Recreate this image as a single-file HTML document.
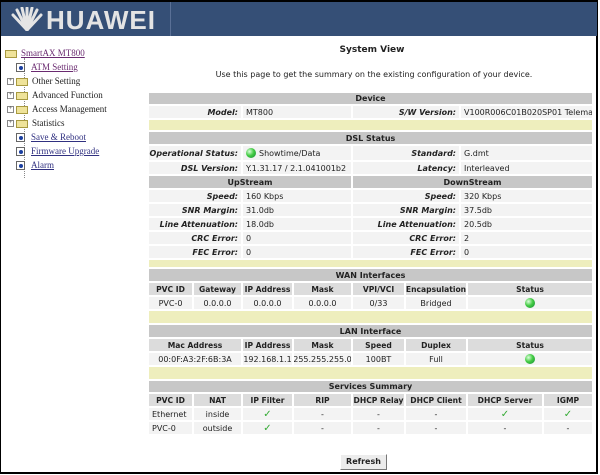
<!DOCTYPE html>
<html><head><meta charset="utf-8"><style>
*{margin:0;padding:0;box-sizing:border-box}
body{width:600px;height:475px;background:#fff;position:relative;overflow:hidden;font-family:"DejaVu Sans",Verdana,sans-serif;font-size:8px;color:#222}
.frame{position:absolute;left:0;top:0;width:598px;height:474px;border:1px solid #000;border-top-width:2px;border-right-width:2px;border-bottom-width:2px}
.hdr{position:absolute;left:1px;top:2px;width:596px;height:34px;background:#354f76}
.hdr .div{position:absolute;left:169px;top:0;width:1px;height:34px;background:#5a7096}
.logo{position:absolute;left:45px;top:3px;font:bold 26px "Liberation Sans",Arial,sans-serif;color:#e4e4e4;letter-spacing:1px}
.fan{position:absolute;left:9px;top:5px}
.side{position:absolute;left:0;top:46px;font:9px "Liberation Serif",serif;color:#222}
.it{position:absolute;white-space:nowrap;height:12px;line-height:12px}
.it a{color:#303080;text-decoration:underline}
.it a.v{color:#6a2a70}
.fold{display:inline-block;width:12px;height:8px;background:#efe39a;border:1px solid #a89a40;vertical-align:middle;margin-right:4px}
.pg{display:inline-block;width:9px;height:9px;border:1px solid #666;background:#fff;vertical-align:middle;margin-right:6px;position:relative}
.pg:after{content:"";position:absolute;left:2px;top:2px;width:4px;height:4px;border-radius:50%;background:#1a3fa0}
.plus{display:inline-block;width:7px;height:7px;border:1px solid #888;font-size:6px;line-height:5px;text-align:center;vertical-align:middle;margin-right:2px;color:#333}
.tl{position:absolute;left:24px;border-left:1px dotted #888}
.title{position:absolute;left:0;width:744px;top:45px;text-align:center;font-weight:bold;font-size:9px}
.sub{position:absolute;left:0;width:748px;top:70px;text-align:center;font-size:8px}
.row{position:absolute;left:148px;width:445px;display:flex}
.row>div{border:1px solid #fff;background:#f3f3f3;overflow:hidden;white-space:nowrap;padding:0 3px;display:flex;align-items:center}
.row.h>div{background:#c7c7c7;font-weight:bold;justify-content:center}
.row.y>div{background:#eeeebd}
.row.ch>div{background:#dcdcdc;font-weight:bold;justify-content:center;padding:0;font-size:7.6px}
.l{justify-content:flex-end;font-weight:bold;font-style:italic}
.c{justify-content:center}
.dot{display:inline-block;width:10px;height:10px;border-radius:50%;background:radial-gradient(circle at 35% 35%,#dfd,#4c4 45%,#183 100%);margin-right:3px}
.ck{color:#3a3;font-size:10px}
.btn{position:absolute;left:340px;top:454px;width:47px;height:16px;background:#ececec;border:1px solid #fff;border-right-color:#777;border-bottom-color:#777;font-weight:bold;font-size:8px;text-align:center;line-height:14px}
</style></head><body>
<div class="frame"></div>
<div class="hdr"><div class="div"></div>
<svg class="fan" width="34" height="24" viewBox="0 0 34 24"><g stroke="#e4e4e4" stroke-width="3" stroke-linecap="round"><line x1="17" y1="23" x2="3" y2="8"/><line x1="17" y1="23" x2="7" y2="3"/><line x1="17" y1="23" x2="12" y2="1"/><line x1="17" y1="23" x2="17" y2="1"/><line x1="17" y1="23" x2="22" y2="1"/><line x1="17" y1="23" x2="27" y2="3"/><line x1="17" y1="23" x2="31" y2="8"/></g></svg>
<div class="logo">HUAWEI</div></div>

<div class="side">
<div class="tl" style="top:12px;height:120px"></div>
<div class="it" style="left:5px;top:1px"><span class="fold"></span><a class="v">SmartAX MT800</a></div>
<div class="it" style="left:16px;top:15px"><span class="pg"></span><a class="v">ATM Setting</a></div>
<div class="it" style="left:7px;top:29px"><span class="plus">+</span><span class="fold"></span>Other Setting</div>
<div class="it" style="left:7px;top:43px"><span class="plus">+</span><span class="fold"></span>Advanced Function</div>
<div class="it" style="left:7px;top:57px"><span class="plus">+</span><span class="fold"></span>Access Management</div>
<div class="it" style="left:7px;top:71px"><span class="plus">+</span><span class="fold"></span>Statistics</div>
<div class="it" style="left:16px;top:85px"><span class="pg"></span><a>Save &amp; Reboot</a></div>
<div class="it" style="left:16px;top:99px"><span class="pg"></span><a>Firmware Upgrade</a></div>
<div class="it" style="left:16px;top:113px"><span class="pg"></span><a>Alarm</a></div>
</div>

<div class="title">System View</div>
<div class="sub">Use this page to get the summary on the existing configuration of your device.</div>

<div class="row h" style="top:92px;height:13px"><div style="width:445px">Device</div></div>
<div class="row" style="top:105px;height:14px"><div class="l" style="width:94px">Model:</div><div style="width:110px">MT800</div><div class="l" style="width:108px">S/W Version:</div><div style="width:133px">V100R006C01B020SP01 Telemar</div></div>
<div class="row y" style="top:119px;height:12px"><div style="width:445px"></div></div>
<div class="row h" style="top:131px;height:14px"><div style="width:445px">DSL Status</div></div>
<div class="row" style="top:145px;height:16px"><div class="l" style="width:94px">Operational Status:</div><div style="width:110px"><span class="dot"></span>Showtime/Data</div><div class="l" style="width:108px">Standard:</div><div style="width:133px">G.dmt</div></div>
<div class="row" style="top:161px;height:14px"><div class="l" style="width:94px">DSL Version:</div><div style="width:110px">Y.1.31.17 / 2.1.041001b2</div><div class="l" style="width:108px">Latency:</div><div style="width:133px">Interleaved</div></div>
<div class="row h" style="top:175px;height:14px"><div style="width:204px">UpStream</div><div style="width:241px">DownStream</div></div>
<div class="row" style="top:189px;height:14px"><div class="l" style="width:94px">Speed:</div><div style="width:110px">160 Kbps</div><div class="l" style="width:108px">Speed:</div><div style="width:133px">320 Kbps</div></div>
<div class="row" style="top:203px;height:14px"><div class="l" style="width:94px">SNR Margin:</div><div style="width:110px">31.0db</div><div class="l" style="width:108px">SNR Margin:</div><div style="width:133px">37.5db</div></div>
<div class="row" style="top:217px;height:14px"><div class="l" style="width:94px">Line Attenuation:</div><div style="width:110px">18.0db</div><div class="l" style="width:108px">Line Attenuation:</div><div style="width:133px">20.5db</div></div>
<div class="row" style="top:231px;height:14px"><div class="l" style="width:94px">CRC Error:</div><div style="width:110px">0</div><div class="l" style="width:108px">CRC Error:</div><div style="width:133px">2</div></div>
<div class="row" style="top:245px;height:14px"><div class="l" style="width:94px">FEC Error:</div><div style="width:110px">0</div><div class="l" style="width:108px">FEC Error:</div><div style="width:133px">0</div></div>
<div class="row y" style="top:259px;height:9px"><div style="width:445px"></div></div>

<div class="row h" style="top:268px;height:14px"><div style="width:445px">WAN Interfaces</div></div>
<div class="row ch" style="top:282px;height:14px"><div style="width:45px">PVC ID</div><div style="width:49px">Gateway</div><div style="width:51px">IP Address</div><div style="width:59px">Mask</div><div style="width:53px">VPI/VCI</div><div style="width:62px">Encapsulation</div><div style="width:126px">Status</div></div>
<div class="row" style="top:296px;height:14px"><div class="c" style="width:45px">PVC-0</div><div class="c" style="width:49px">0.0.0.0</div><div class="c" style="width:51px">0.0.0.0</div><div class="c" style="width:59px">0.0.0.0</div><div class="c" style="width:53px">0/33</div><div class="c" style="width:62px">Bridged</div><div class="c" style="width:126px"><span class="dot" style="margin:0"></span></div></div>
<div class="row y" style="top:310px;height:14px"><div style="width:445px"></div></div>

<div class="row h" style="top:324px;height:14px"><div style="width:445px">LAN Interface</div></div>
<div class="row ch" style="top:338px;height:14px"><div style="width:94px">Mac Address</div><div style="width:51px">IP Address</div><div style="width:59px">Mask</div><div style="width:53px">Speed</div><div style="width:62px">Duplex</div><div style="width:126px">Status</div></div>
<div class="row" style="top:352px;height:14px"><div class="c" style="width:94px">00:0F:A3:2F:6B:3A</div><div class="c" style="width:51px;padding:0">192.168.1.1</div><div class="c" style="width:59px;padding:0">255.255.255.0</div><div class="c" style="width:53px">100BT</div><div class="c" style="width:62px">Full</div><div class="c" style="width:126px"><span class="dot" style="margin:0"></span></div></div>
<div class="row y" style="top:366px;height:14px"><div style="width:445px"></div></div>

<div class="row h" style="top:380px;height:13px"><div style="width:445px">Services Summary</div></div>
<div class="row ch" style="top:393px;height:14px"><div style="width:45px">PVC ID</div><div style="width:49px">NAT</div><div style="width:51px">IP Filter</div><div style="width:59px">RIP</div><div style="width:53px">DHCP Relay</div><div style="width:62px">DHCP Client</div><div style="width:76px">DHCP Server</div><div style="width:50px">IGMP</div></div>
<div class="row" style="top:407px;height:14px"><div style="width:45px">Ethernet</div><div class="c" style="width:49px">inside</div><div class="c ck" style="width:51px">✓</div><div class="c" style="width:59px">-</div><div class="c" style="width:53px">-</div><div class="c" style="width:62px">-</div><div class="c ck" style="width:76px">✓</div><div class="c ck" style="width:50px">✓</div></div>
<div class="row" style="top:421px;height:14px"><div style="width:45px">PVC-0</div><div class="c" style="width:49px">outside</div><div class="c ck" style="width:51px">✓</div><div class="c" style="width:59px">-</div><div class="c" style="width:53px">-</div><div class="c" style="width:62px">-</div><div class="c" style="width:76px">-</div><div class="c" style="width:50px">-</div></div>

<div class="btn">Refresh</div>
</body></html>
